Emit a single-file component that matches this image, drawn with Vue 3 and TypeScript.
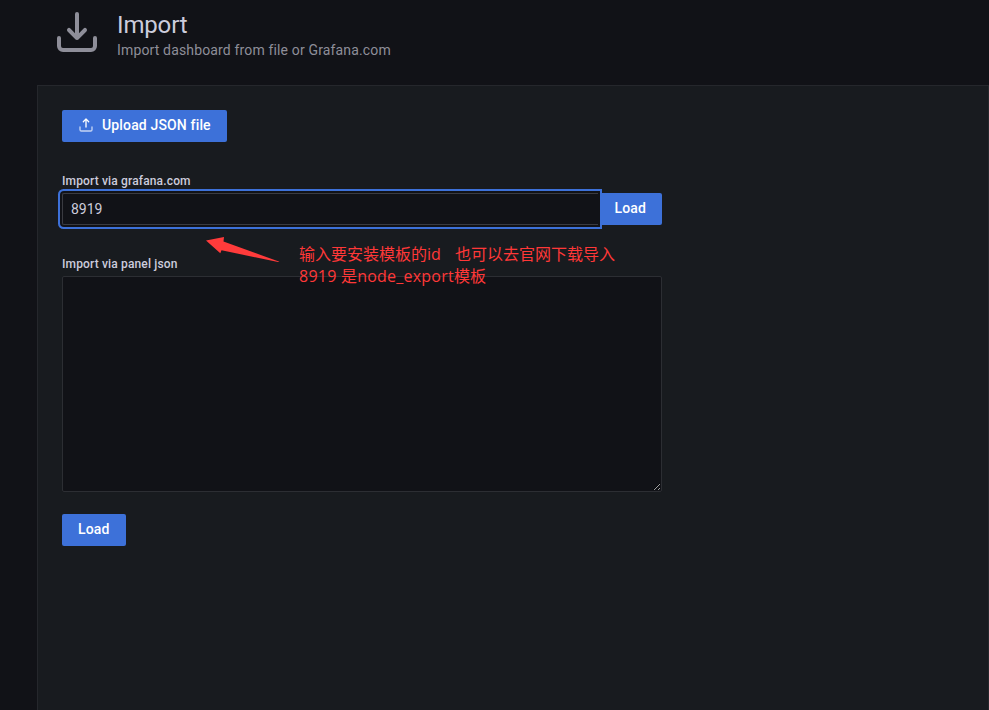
<script setup lang="ts">
import { ref } from 'vue'

const dashboardId = ref<string>('8919')
const panelJson = ref<string>('')

const tray =
  'M21,14a1,1,0,0,0-1,1v4a1,1,0,0,1-1,1H5a1,1,0,0,1-1-1V15a1,1,0,0,0-2,0v4a3,3,0,0,0,3,3H19a3,3,0,0,0,3-3V15A1,1,0,0,0,21,14Z'
const arrowDown =
  'M11.29,15.71a1,1,0,0,0,.33.21.94.94,0,0,0,.76,0,1,1,0,0,0,.33-.21l4-4a1,1,0,0,0-1.42-1.42L13,12.59V3a1,1,0,0,0-2,0v9.59l-2.29-2.3a1,1,0,1,0-1.42,1.42Z'
const arrowUp =
  'M8.71,7.71,11,5.41V15a1,1,0,0,0,2,0V5.41l2.29,2.3a1,1,0,0,0,1.42,0,1,1,0,0,0,0-1.42l-4-4a1,1,0,0,0-.33-.21,1,1,0,0,0-.76,0,1,1,0,0,0-.33.21l-4,4A1,1,0,1,0,8.71,7.71Z'
</script>

<template>
  <div class="page">
    <header class="header">
      <svg class="header-icon" viewBox="0 0 24 24" width="48" height="48">
        <path :d="tray" />
        <path :d="arrowDown" />
      </svg>
      <div class="titles">
        <h1>Import</h1>
        <div class="subtitle">Import dashboard from file or Grafana.com</div>
      </div>
    </header>

    <main class="panel">
      <button class="btn upload" type="button">
        <svg class="btn-icon" viewBox="0 0 24 24" width="16" height="16">
          <path :d="tray" opacity="0.7" />
          <path :d="arrowUp" />
        </svg>
        <span>Upload JSON file</span>
      </button>

      <label class="label" for="gcom">Import via grafana.com</label>
      <div class="row">
        <input id="gcom" v-model="dashboardId" class="input" type="text" />
        <button class="btn attached" type="button">Load</button>
      </div>

      <label class="label json-label" for="json">Import via panel json</label>
      <textarea id="json" v-model="panelJson" class="textarea"></textarea>

      <button class="btn submit" type="button">Load</button>
    </main>

    <svg class="note-arrow" viewBox="0 0 76 28" width="76" height="28">
      <path d="M1,4.5 L19,1 L18.5,5.5 L74.5,25.8 L73,26 L16.5,14.3 L15.3,17.3 Z" />
    </svg>
    <div class="note">
      <div class="note-line"><span class="first">输入要安装模板的id</span><span>也可以去官网下载导入</span></div>
      <div class="note-line second">8919 是node_export模板</div>
    </div>
  </div>
</template>

<style>
body {
  margin: 0;
  background: #111217;
}
</style>

<style scoped>
.page {
  position: relative;
  box-sizing: border-box;
  display: flex;
  flex-direction: column;
  height: 710px;
  overflow: hidden;
  background: #111217;
  color: #ccccdc;
  font-family: Roboto, sans-serif;
  font-size: 14px;
}
.header {
  display: flex;
  height: 85px;
  flex: none;
  padding-left: 53px;
  box-sizing: border-box;
}
.header-icon {
  margin-top: 8px;
  fill: #8e8e99;
}
.titles {
  padding: 10px 0 0 16px;
}
h1 {
  margin: 0;
  font-size: 24px;
  font-weight: 400;
  line-height: 30px;
  letter-spacing: -0.15px;
}
.subtitle {
  line-height: 20px;
  letter-spacing: 0.15px;
  color: #8e8e99;
}
.panel {
  flex: 1;
  display: flex;
  flex-direction: column;
  align-items: flex-start;
  box-sizing: border-box;
  margin: 0 0 0 37px;
  padding: 24px;
  background: #181b1f;
  border: 1px solid #25272c;
  border-bottom: 0;
}
.btn {
  display: flex;
  align-items: center;
  box-sizing: border-box;
  height: 32px;
  flex: none;
  padding: 0 16px 2px;
  border: 0;
  border-radius: 2px;
  background: #3d71d9;
  color: #fff;
  font: 500 14px/30px Roboto, sans-serif;
  letter-spacing: 0.15px;
}
.btn-icon {
  margin-right: 8px;
  fill: #fff;
}
.label {
  margin-top: 31px;
  font-size: 12px;
  font-weight: 500;
  line-height: 16px;
  letter-spacing: 0.15px;
}
.row {
  display: flex;
  margin-top: 4px;
  width: 600px;
}
.input {
  position: relative;
  z-index: 1;
  flex: 1;
  min-width: 0;
  height: 32px;
  box-sizing: border-box;
  padding: 0 8px;
  border: 1px solid #3a3b41;
  border-right: 0;
  border-radius: 2px 0 0 2px;
  outline: none;
  background: #111217;
  color: #ccccdc;
  font: 400 14px/22px Roboto, sans-serif;
  box-shadow: 0 0 0 2px #111217, 0 0 0 4px #3d71d9;
}
.attached {
  border-radius: 0 2px 2px 0;
}
.json-label {
  margin-top: 31px;
}
.textarea {
  display: block;
  box-sizing: border-box;
  width: 600px;
  height: 216px;
  margin: 4px 0 0;
  padding: 4px 8px;
  border: 1px solid #2c2e33;
  border-radius: 2px;
  outline: none;
  background: #111217;
  color: #ccccdc;
  font: 400 14px/22px Roboto, sans-serif;
}
.submit {
  margin-top: 22px;
}
.note-arrow {
  position: absolute;
  left: 205px;
  top: 236px;
  fill: #ff3b3b;
}
.note {
  position: absolute;
  left: 299px;
  top: 243px;
  color: #ff3838;
  font: 400 16px/22px "Open Sans", "Noto Sans CJK SC", sans-serif;
  white-space: nowrap;
}
.note-line {
  height: 22px;
}
.second {
  letter-spacing: 0.23px;
}
.first {
  display: inline-block;
  width: 156px;
}
</style>
